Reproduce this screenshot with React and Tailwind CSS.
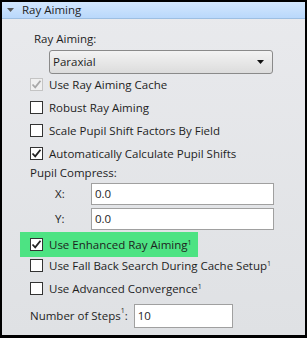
import React from 'react';

const Check = ({ checked, disabled }) => (
  <span
    className={`w-[13px] h-[13px] shrink-0 border flex items-center justify-center ${
      disabled ? 'border-[#c4c4c4] bg-[#f0f0f0]' : 'border-[#333] bg-white'
    }`}
  >
    {checked && (
      <svg width="11" height="11" viewBox="0 0 11 11">
        <path
          d="M1.5 5.5 L4.2 8.4 L9.5 1.8"
          fill="none"
          stroke={disabled ? '#a8a8a8' : '#222'}
          strokeWidth="1.8"
        />
      </svg>
    )}
  </span>
);

const Sup = () => (
  <span className="inline-block align-top text-[7px] leading-none">1</span>
);

const CheckRow = ({ label, checked, disabled, sup, className = '' }) => (
  <div className={`h-[23px] flex items-center gap-[6px] pl-[10px] whitespace-nowrap ${className}`}>
    <Check checked={checked} disabled={disabled} />
    <span className="leading-none">
      {label}
      {sup && <Sup />}
    </span>
  </div>
);

const Field = ({ value, className }) => (
  <div className={`h-[22px] bg-white border border-[#a0a0a0] flex items-center pl-[3px] ${className}`}>
    {value}
  </div>
);

export default function App() {
  return (
    <div
      className="w-[307px] h-[338px] bg-black pt-[2px] pl-[2px] pr-[2px] pb-[3px] text-[11.5px] text-[#1e1e1e]"
      style={{ fontFamily: '"Open Sans", "Noto Sans", sans-serif' }}
    >
      <div className="h-full flex flex-col bg-gradient-to-b from-[#e9eaed] to-[#dfe1e4]">
        {/* header */}
        <div className="h-[17px] flex items-center gap-[8px] pl-[5px] bg-gradient-to-b from-[#d3e7fd] to-[#b9d8fb] border-b border-[#9dbfe2]">
          <svg width="7" height="5" viewBox="0 0 7 5">
            <path d="M0 0 H7 L3.5 4 Z" fill="#5a5a5a" />
          </svg>
          <span className="leading-none">Ray Aiming</span>
        </div>

        <div className="flex flex-col pl-[18px] pt-[10px]">
          <div className="h-[20px] pl-[14px] flex items-center">Ray Aiming:</div>
          <div className="ml-[29px] mt-[1px] w-[224px] h-[24px] rounded-[3px] border border-[#8a8a8a] bg-gradient-to-b from-[#f3f3f3] to-[#dcdcdc] flex items-center justify-between pl-[3px] pr-[8px]">
            <span>Paraxial</span>
            <svg width="7" height="4" viewBox="0 0 7 4">
              <path d="M0 0 H7 L3.5 4 Z" fill="#111" />
            </svg>
          </div>

          <div className="mt-[-1px] flex flex-col">
            <CheckRow label="Use Ray Aiming Cache" checked disabled />
            <CheckRow label="Robust Ray Aiming" />
            <CheckRow label="Scale Pupil Shift Factors By Field" />
            <CheckRow label="Automatically Calculate Pupil Shifts" checked />
          </div>

          <div className="h-[16px] pl-[10px] flex items-center">Pupil Compress:</div>
          <div className="flex items-center h-[25px]">
            <span className="w-[71px] pl-[35px]">X:</span>
            <Field value="0.0" className="w-[183px]" />
          </div>
          <div className="flex items-center h-[25px]">
            <span className="w-[71px] pl-[35px]">Y:</span>
            <Field value="0.0" className="w-[183px]" />
          </div>

          <CheckRow
            label="Use Enhanced Ray Aiming"
            checked
            sup
            className="w-[178px] h-[25px] bg-[#4de383] mt-[1px]"
          />
          <CheckRow label="Use Fall Back Search During Cache Setup" sup className="-mt-[3px]" />
          <CheckRow label="Use Advanced Convergence" sup />

          <div className="flex items-center pl-[10px] mt-[4px] gap-[6px]">
            <span className="whitespace-nowrap">
              Number of Steps<Sup />:
            </span>
            <Field value="10" className="w-[99px] h-[24px]" />
          </div>
        </div>
      </div>
    </div>
  );
}
